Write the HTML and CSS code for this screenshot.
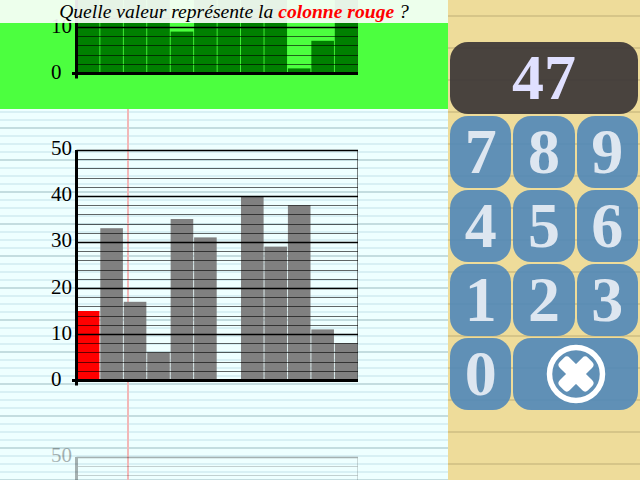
FILE: index.html
```html
<!DOCTYPE html>
<html lang="fr">
<head>
  <meta charset="UTF-8">
  <title>Lecture de graphique</title>
  <link rel="stylesheet" href="styles.css">
</head>
<body>
<div class="game">
  <div class="paper">
    <div class="question">Quelle valeur représente la <b>colonne rouge</b> ?</div>
    <div class="charts" id="charts"></div>
  </div>
  <div class="pad">
    <div class="display">47</div>
    <button class="key">7</button>
    <button class="key">8</button>
    <button class="key">9</button>
    <button class="key">4</button>
    <button class="key">5</button>
    <button class="key">6</button>
    <button class="key">1</button>
    <button class="key">2</button>
    <button class="key">3</button>
    <button class="key">0</button>
    <button class="key key-wide">
      <svg class="clear-icon" width="60" height="60" viewBox="-30 -30 60 60">
        <circle r="26.5" fill="none" stroke="#fff" stroke-width="5.5"/>
        <rect x="-20" y="-7" width="40" height="14" rx="4" fill="#fff" transform="rotate(45)"/>
        <rect x="-20" y="-7" width="40" height="14" rx="4" fill="#fff" transform="rotate(-45)"/>
      </svg>
    </button>
  </div>
</div>

<script>
  // only the labels that scroll into view are listed
  const rounds = [
    { state: 'done', bars: [30, 30, 30, 30, 9, 30, 30, 30, 30, 1, 7, 30], red: -1, fill: '#008000', labels: [10, 0] },
    { state: 'current', bars: [15, 33, 17, 6, 35, 31, 0, 40, 29, 38, 11, 8], red: 0, fill: '#808080', labels: [50, 40, 30, 20, 10, 0] },
    { state: 'next', bars: [], red: -1, fill: '#808080', labels: [50] }
  ];

  const axisLeft = 76.5, axisRight = 358, axisTop = 41, axisBottom = 271.5;

  function drawChart(round) {
    let s = '';
    round.bars.forEach((v, i) => {
      if (!v) return;
      const h = v * 4.6;
      const x = 76.85 + i * 23.45;
      s += `<rect x="${x}" y="${271 - h}" width="22.6" height="${h}" fill="${i === round.red ? '#f00' : round.fill}"/>`;
    });
    for (let i = 0; i < 25; i++) {
      const y = Math.round(axisTop + i * 9.2) + 0.5;
      const major = i % 5 === 0;
      s += `<line x1="${axisLeft}" x2="${axisRight}" y1="${y}" y2="${y}" stroke="${major ? '#000' : 'rgba(0,0,0,0.6)'}" stroke-width="${major ? 1.5 : 1}"/>`;
    }
    round.labels.forEach(v => {
      s += `<text x="51" y="${277 - v * 4.62}">${v}</text>`;
    });
    s += `<line x1="${axisRight - 0.5}" x2="${axisRight - 0.5}" y1="${axisTop}" y2="${axisBottom}" stroke="rgba(0,0,0,0.5)"/>`;
    s += `<path d="M${axisLeft} ${axisTop}V${axisBottom + 5}M72 ${axisBottom}H${axisRight}" stroke="#000" stroke-width="3" fill="none"/>`;
    return `<svg class="chart" width="448" height="307">${s}</svg>`;
  }

  document.getElementById('charts').innerHTML = rounds
    .map(r => `<div class="round ${r.state}">${drawChart(r)}</div>`)
    .join('');
</script>
</body>
</html>
```

FILE: styles.css
```css
html, body {
  margin: 0;
  height: 100%;
  overflow: hidden;
}
.game {
  display: flex;
  width: 640px;
  height: 480px;
  overflow: hidden;
  font-family: "Liberation Serif", serif;
}
.paper {
  position: relative;
  flex: 0 0 448px;
  height: 480px;
  overflow: hidden;
  background-color: #eeffff;
  background-image:
    linear-gradient(#f2b8b8, #f2b8b8),
    repeating-linear-gradient(to bottom, #c4dde0 0 2px, transparent 2px 32px),
    repeating-linear-gradient(to bottom, #d8f0f4 0 2px, transparent 2px 8px);
  background-size: 2px 100%, auto, auto;
  background-position: 127px 0, 0 -1px, 0 -1px;
  background-repeat: no-repeat, repeat, repeat;
}
.question {
  position: absolute;
  top: 0;
  left: 0;
  right: 0;
  z-index: 2;
  height: 23px;
  padding-left: 20px;
  line-height: 23px;
  font-size: 19.6px;
  font-style: italic;
  text-align: center;
  color: #000;
  background: rgba(255, 255, 255, 0.9);
}
.question b {
  color: #f00;
}
.charts {
  margin-top: -198px;
}
.round {
  height: 307px;
}
.round.done {
  background: #4cff3f;
}
.round.next .chart {
  opacity: 0.3;
}
.chart {
  display: block;
  font-size: 21px;
}
.pad {
  flex: 1;
  display: grid;
  grid-template-columns: repeat(3, 1fr);
  grid-auto-rows: 72px;
  gap: 2px;
  align-content: start;
  padding: 42px 2px 0;
  background-color: #eedc9a;
  background-image: repeating-linear-gradient(to bottom, transparent 0 15px, #d6c588 15px 17px, transparent 17px 32px);
}
.display {
  grid-column: span 3;
  border-radius: 18px;
  background: rgba(60, 55, 55, 0.93);
  color: #e0e0ff;
  font-size: 64px;
  font-weight: bold;
  line-height: 72px;
  text-align: center;
}
.key {
  display: flex;
  align-items: center;
  justify-content: center;
  padding: 0;
  border: 0;
  border-radius: 18px;
  background: rgba(80, 135, 185, 0.9);
  color: #dde6f0;
  font-family: inherit;
  font-size: 64px;
  font-weight: bold;
}
.key-wide {
  grid-column: span 2;
}
```
